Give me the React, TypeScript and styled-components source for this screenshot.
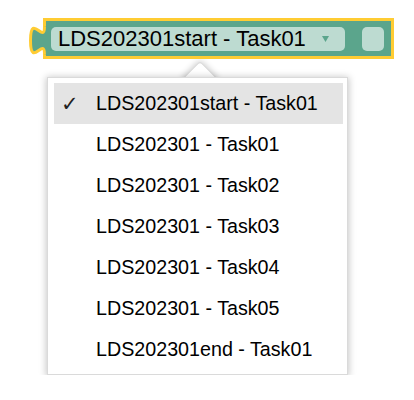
import React from 'react';
import styled, { createGlobalStyle } from 'styled-components';

const GREEN = '#5ba58c';
const YELLOW = '#ffcc33';
const FIELD = '#bddbd1';

const options = [
  'LDS202301start - Task01',
  'LDS202301 - Task01',
  'LDS202301 - Task02',
  'LDS202301 - Task03',
  'LDS202301 - Task04',
  'LDS202301 - Task05',
  'LDS202301end - Task01',
];

const TAB_PATH = 'M15.5 8.5 c 0 18.7 -14 -15 -14 14 s 14 -4.7 14 14';

const GlobalStyle = createGlobalStyle`
  body {
    margin: 0;
    background: #fff;
    font-family: "Liberation Sans", Arial, sans-serif;
  }
`;

const Page = styled.div`
  display: flex;
  flex-direction: column;
  align-items: flex-start;
  padding: 18px 0 0 29px;
`;

const BlockRow = styled.div`
  display: flex;
  align-items: flex-start;
`;

const Tab = styled.svg`
  position: relative;
  z-index: 1;
  flex-shrink: 0;
  margin-right: -4px;
`;

const BlockBody = styled.div`
  box-sizing: border-box;
  width: 351px;
  height: 41px;
  display: flex;
  align-items: center;
  gap: 17px;
  padding: 1px 7px 0 5px;
  background: ${GREEN};
  border: 3px solid ${YELLOW};
`;

const Field = styled.div`
  box-sizing: border-box;
  width: 294px;
  height: 24px;
  display: flex;
  align-items: center;
  padding-left: 7px;
  border-radius: 5px;
  background: ${FIELD};
  color: #000;
  font-size: 22px;
  line-height: 24px;
  white-space: nowrap;
`;

const FieldArrow = styled.svg`
  margin-left: 16px;
  flex-shrink: 0;
`;

const Slot = styled.div`
  width: 22px;
  height: 24px;
  border-radius: 5px;
  background: ${FIELD};
`;

const Menu = styled.div`
  position: relative;
  box-sizing: border-box;
  width: 301px;
  margin: 18px 0 0 18px;
  padding: 5px 4px 4px 6px;
  background: #fff;
  border: 1px solid #dadada;
  box-shadow: 0 1px 7px 1px rgba(0, 0, 0, 0.22);

  &::before {
    content: '';
    position: absolute;
    z-index: -1;
    left: 140px;
    top: -12px;
    width: 22px;
    height: 22px;
    background: #fff;
    border: 1px solid #dadada;
    border-top-left-radius: 3px;
    transform: rotate(45deg);
    box-shadow: 0 0 6px 1px rgba(0, 0, 0, 0.2);
  }
`;

const Item = styled.div<{ $selected?: boolean }>`
  display: flex;
  align-items: center;
  height: 41px;
  background: ${(p) => (p.$selected ? '#e4e4e4' : 'transparent')};
  color: #000;
  font-size: 19.7px;
  white-space: nowrap;
`;

const Check = styled.span`
  box-sizing: border-box;
  width: 42px;
  padding-left: 7px;
  font-family: "DejaVu Sans", sans-serif;
  font-size: 21px;
  color: #222;
`;

const App = () => {
  return (
    <>
      <GlobalStyle />
      <Page>
        <BlockRow>
          <Tab width="18" height="41" viewBox="0 0 18 41">
            <path d={`${TAB_PATH} L 18 36.5 L 18 8.5 Z`} fill={GREEN} />
            <path d={TAB_PATH} fill="none" stroke={YELLOW} strokeWidth="3" />
          </Tab>
          <BlockBody>
            <Field>
              LDS202301start - Task01
              <FieldArrow width="7" height="6" viewBox="0 0 7 6">
                <path d="M0 0 H7 L3.5 6 Z" fill={GREEN} />
              </FieldArrow>
            </Field>
            <Slot />
          </BlockBody>
        </BlockRow>
        <Menu>
          {options.map((label, i) => (
            <Item key={label} $selected={i === 0}>
              <Check>{i === 0 ? '✓' : ''}</Check>
              {label}
            </Item>
          ))}
        </Menu>
      </Page>
    </>
  );
};

export default App;
